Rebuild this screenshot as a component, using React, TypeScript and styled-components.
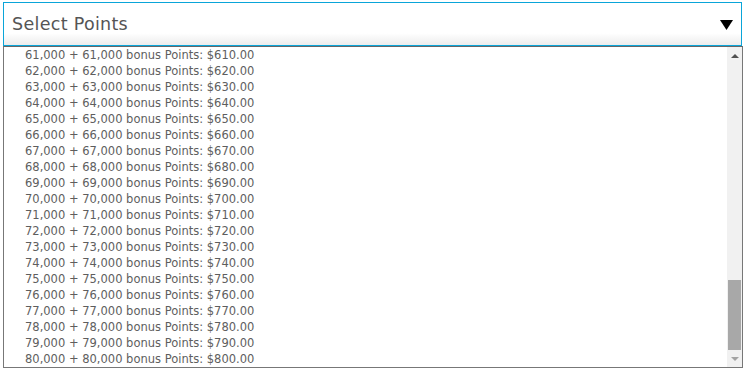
import React from "react";
import styled, { createGlobalStyle } from "styled-components";

const GlobalStyle = createGlobalStyle`
  html, body {
    margin: 0;
    padding: 0;
    background: #fff;
  }
  body {
    padding: 2px 1px 0 3px;
    font-family: "DejaVu Sans", "Liberation Sans", sans-serif;
  }
`;

const Wrapper = styled.div`
  width: 739px;
  display: flex;
  flex-direction: column;
`;

const SelectBox = styled.div`
  height: 42px;
  border: 1px solid #0aa5d9;
  background: linear-gradient(to bottom, #fff 0%, #fff 72%, #ececec 100%);
  display: flex;
  align-items: center;
  justify-content: space-between;
  padding: 0 8px 0 8px;
`;

const Placeholder = styled.span`
  font-size: 17.5px;
  color: #555;
  letter-spacing: 0.3px;
`;

const Caret = styled.svg`
  width: 13px;
  height: 10px;
  margin-top: 2px;
`;

const ListBox = styled.div`
  display: flex;
  height: 320px;
  border: 1px solid #777;
  border-top-color: #666;
  margin-right: -1px;
`;

const Options = styled.ul`
  flex: 1;
  list-style: none;
  margin: 0;
  padding: 0 0 0 21px;
  overflow: hidden;
`;

const Option = styled.li`
  height: 16px;
  line-height: 16px;
  font-size: 11.5px;
  color: #5e5e5e;
  white-space: nowrap;
`;

const ScrollBar = styled.div`
  width: 15px;
  background: #f1f1f1;
  display: flex;
  flex-direction: column;
`;

const ArrowButton = styled.div`
  height: 17px;
  display: flex;
  align-items: center;
  justify-content: center;
`;

const Track = styled.div`
  flex: 1;
  display: flex;
  flex-direction: column;
  justify-content: flex-end;
  align-items: center;
`;

const Thumb = styled.div`
  width: 13px;
  height: 70px;
  background: #a8a8a8;
`;

const Arrow = ({ up, color }: { up?: boolean; color: string }) => (
  <svg width="8" height="4" viewBox="0 0 8 4">
    <polygon points={up ? "0,4 8,4 4,0" : "0,0 8,0 4,4"} fill={color} />
  </svg>
);

const rows = Array.from({ length: 20 }, (_, i) => 61 + i);

const App = () => (
  <>
    <GlobalStyle />
    <Wrapper>
      <SelectBox>
        <Placeholder>Select Points</Placeholder>
        <Caret viewBox="0 0 13 10">
          <polygon points="0,0 13,0 6.5,10" fill="#000" />
        </Caret>
      </SelectBox>
      <ListBox>
        <Options>
          {rows.map((n) => (
            <Option key={n}>
              {n},000 + {n},000 bonus Points: ${n * 10}.00
            </Option>
          ))}
        </Options>
        <ScrollBar>
          <ArrowButton>
            <Arrow up color="#505050" />
          </ArrowButton>
          <Track>
            <Thumb />
          </Track>
          <ArrowButton>
            <Arrow color="#a3a3a3" />
          </ArrowButton>
        </ScrollBar>
      </ListBox>
    </Wrapper>
  </>
);

export default App;
